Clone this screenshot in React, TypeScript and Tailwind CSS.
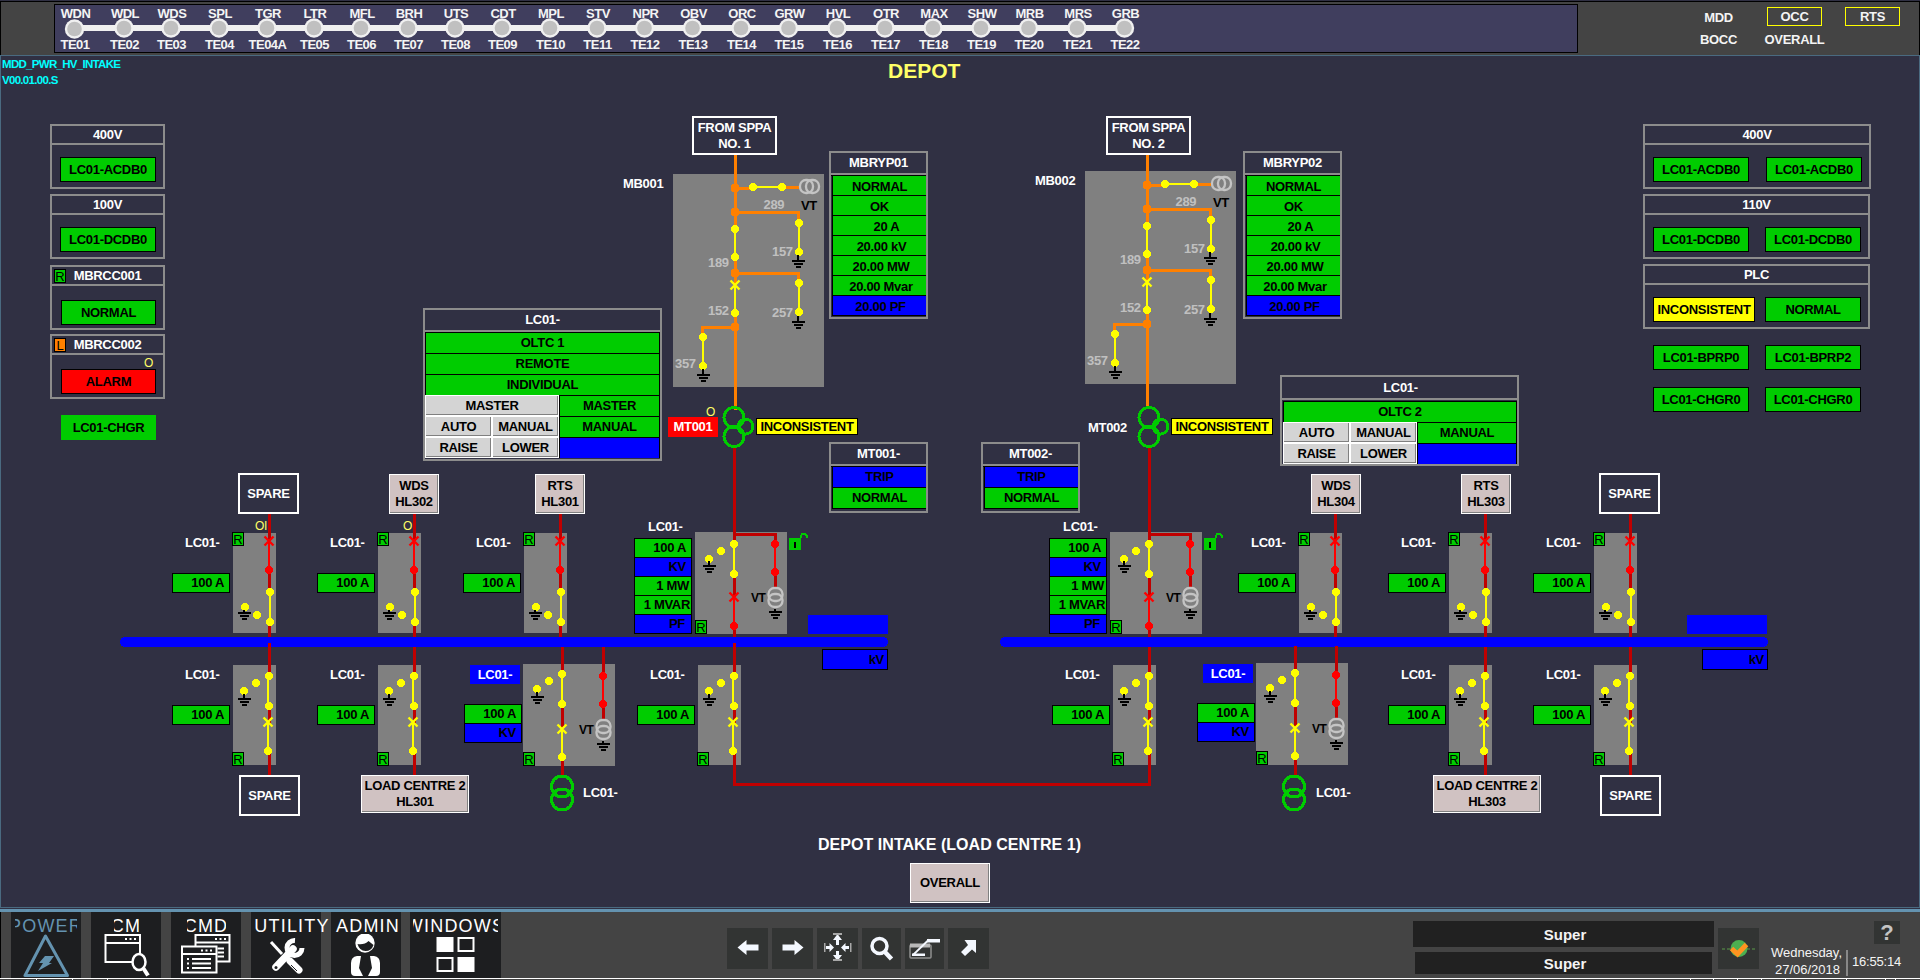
import React from "react";
import clsx from "clsx";

/* ---------- canvas helpers ---------- */

const X0 = 1;
const Y0 = 56;
const YELLOW = "#ffff00";
const RED = "#ff0000";
const FEED = "#c00000";
const ORANGE = "#ff8000";
const LIVE = "#00cc00";

type BoxProps = {
  x: number;
  y: number;
  w?: number;
  h?: number;
  className?: string;
  children?: React.ReactNode;
};

function Place({ x, y, w, h, className, children }: BoxProps) {
  return (
    <div
      className={clsx("absolute flex items-center whitespace-nowrap", className)}
      style={{ left: x - X0, top: y - Y0, width: w, height: h }}
    >
      {children}
    </div>
  );
}

const Label = (p: BoxProps) => <Place h={16} {...p} className={clsx("text-white", p.className)} />;

const FrameNode = (p: BoxProps) => (
  <Place {...p} className="justify-center border-2 border-white bg-[#303043] text-center leading-[16px] text-white" />
);

const LinkNode = (p: BoxProps) => (
  <Place
    {...p}
    className="justify-center border border-white bg-[#d0c2c2] text-center leading-[16px] text-black shadow-[inset_-1px_-1px_0_#808080]"
  />
);

function Badge({ letter, local }: { letter: string; local?: boolean }) {
  return (
    <span
      className={clsx(
        "flex h-[14px] w-[12px] items-center justify-center border border-black text-[13px] leading-none font-normal tracking-normal text-black",
        local ? "bg-[#ff8000]" : "bg-[#00cc00]",
      )}
    >
      {letter}
    </span>
  );
}

/* ---------- symbols ---------- */

const Dot = ({ x, y, c = YELLOW, r = 4 }: { x: number; y: number; c?: string; r?: number }) => (
  <circle cx={x} cy={y} r={r} fill={c} />
);

const Wire = ({ d, c = FEED, w = 3 }: { d: string; c?: string; w?: number }) => (
  <path d={d} stroke={c} strokeWidth={w} fill="none" />
);

const Cross = ({ x, y, c = YELLOW }: { x: number; y: number; c?: string }) => (
  <path d={`M${x - 4.5} ${y - 4.5}l9 9M${x + 4.5} ${y - 4.5}l-9 9`} stroke={c} strokeWidth={2.400} fill="none" shapeRendering="auto" />
);

const Ground = ({ x, y, stem = 4 }: { x: number; y: number; stem?: number }) => (
  <g fill="#000">
    <rect x={x - 1} y={y - stem} width={2} height={stem} />
    <rect x={x - 6} y={y} width={13} height={2} />
    <rect x={x - 4} y={y + 3} width={9} height={2} />
    <rect x={x - 2} y={y + 6} width={5} height={2} />
  </g>
);

const Isolator = ({ x, y1, y2, c = YELLOW }: { x: number; y1: number; y2: number; c?: string }) => (
  <>
    <rect x={x - 1} y={y1} width={2} height={y2 - y1} fill={c} />
    <Dot x={x} y={y1} c={c} />
    <Dot x={x} y={y2} c={c} />
  </>
);

const Breaker = ({ x, y1, y2, c = YELLOW }: { x: number; y1: number; y2: number; c?: string }) => (
  <>
    <rect x={x - 1} y={y1} width={2} height={y2 - y1} fill={c} />
    <Cross x={x} y={y1} c={c} />
    <Dot x={x} y={y2} c={c} />
  </>
);

const Coil = ({ x, y }: { x: number; y: number }) => (
  <g fill="none" stroke="#c4c4c4" strokeWidth={2.300} shapeRendering="auto">
    <rect x={x - 7} y={y + 1} width={14} height={13} rx={6} />
    <rect x={x - 7} y={y + 7} width={14} height={13} rx={6} />
  </g>
);

const Mimic = ({ x, y, size = 13, fill = "#c0c0c0", children, len }: { x: number; y: number; size?: number; fill?: string; children: string; len?: number }) => (
  <text x={x} y={y} fontSize={size} fill={fill} textLength={len}>
    {children}
  </text>
);

/* Intake switchgear between the utility supply and the main transformer */
function Intake({ dx, dy, tx }: { dx: number; dy: number; tx: number }) {
  return (
    <>
      <g transform={`translate(${dx} ${dy})`}>
        <rect x={673} y={174} width={151} height={213} fill="#808080" />
        <Wire d="M735.5 150V410" c={ORANGE} />
        <Wire d="M735 188.5H753M782 187.500H799" c={ORANGE} />
        <Wire d="M735 212.500H798.5V223" c={ORANGE} />
        <Wire d="M735 273.500H798.5V283" c={ORANGE} />
        <Wire d="M735 327.500H702.5V337" c={ORANGE} />
        {[188, 212, 273, 327].map((y) => (
          <Dot key={y} x={735} y={y} c={ORANGE} r={4.5} />
        ))}
        <rect x={753} y={186} width={29} height={2} fill={YELLOW} />
        <Dot x={753} y={187} />
        <Dot x={782} y={187} />
        <g fill="none" stroke="#c4c4c4" strokeWidth={2.300} shapeRendering="auto">
          <rect x={800} y={180} width={13} height={13} rx={6} />
          <rect x={806} y={180} width={13} height={13} rx={6} />
        </g>
        <rect x={733} y={229} width={5} height={28} fill="#808080" />
        <Isolator x={735} y1={229} y2={257} />
        <rect x={733} y={287} width={5} height={26} fill="#808080" />
        <Breaker x={735} y1={285} y2={313} />
        <Isolator x={799} y1={223} y2={252} />
        <Ground x={798} y={260} stem={5} />
        <Isolator x={799} y1={283} y2={312} />
        <Ground x={798} y={321} stem={5} />
        <Isolator x={703} y1={337} y2={366} />
        <Ground x={703} y={374} stem={5} />
        <Mimic x={763.500} y={209}>289</Mimic>
        <Mimic x={772} y={256}>157</Mimic>
        <Mimic x={708} y={267}>189</Mimic>
        <Mimic x={708} y={315}>152</Mimic>
        <Mimic x={772} y={317}>257</Mimic>
        <Mimic x={675} y={368}>357</Mimic>
        <Mimic x={801} y={210} fill="#000">VT</Mimic>
      </g>
      <g transform={`translate(${tx} 0)`}>
        <Wire d="M734.5 447V540" />
        <g fill="none" stroke={LIVE} strokeWidth={3}>
          <circle cx={734} cy={417.500} r={10} />
          <circle cx={734} cy={436.500} r={10} />
          <circle cx={745.500} cy={426.500} r={7.500} />
        </g>
      </g>
    </>
  );
}

/* Outgoing feeder above the busbar */
function UpperBay({ x }: { x: number }) {
  return (
    <g transform={`translate(${x} 0)`}>
      <rect x={0} y={533} width={43} height={100} fill="#808080" />
      <Wire d="M36.500 513V638" />
      <rect x={34} y={541} width={5} height={29} fill="#808080" />
      <Breaker x={36} y1={541} y2={570} c={RED} />
      <rect x={34} y={592} width={5} height={30} fill="#808080" />
      <Isolator x={37} y1={592} y2={622} />
      <Dot x={12} y={607} />
      <Dot x={24} y={615} />
      <Ground x={11} y={612} stem={2} />
    </g>
  );
}

/* Outgoing feeder below the busbar */
function LowerBay({ x, from = 647, to = 776 }: { x: number; from?: number; to?: number }) {
  return (
    <g transform={`translate(${x} 0)`}>
      <rect x={0} y={665} width={43} height={100} fill="#808080" />
      <Wire d={`M36.500 ${from}V${to}`} />
      <rect x={34} y={676} width={5} height={30} fill="#808080" />
      <rect x={34} y={724} width={5} height={27} fill="#808080" />
      <rect x={34} y={676} width={2} height={30} fill={YELLOW} />
      <Dot x={36} y={676} />
      <Dot x={36} y={706} />
      <Breaker x={35} y1={722} y2={751} />
      <Dot x={23} y={683} />
      <Dot x={11} y={691} />
      <Ground x={11} y={698} />
    </g>
  );
}

/* Bay with a voltage transformer; incomer sits above the busbar */
function VtBay({ x, y, incomer }: { x: number; y: number; incomer?: boolean }) {
  return (
    <g transform={`translate(${x} ${y})`}>
      <rect x={0} y={0} width={92} height={102} fill="#808080" />
      {incomer ? (
        <>
          <Wire d="M39.500 -20V105" />
          <Wire d="M39 2.500H80.500V55" />
        </>
      ) : (
        <>
          <Wire d="M39.500 -17V112" />
          <Wire d="M80.500 -17V55" />
        </>
      )}
      <rect x={37} y={incomer ? 12 : 10} width={5} height={30} fill="#808080" />
      <Isolator x={39} y1={incomer ? 12 : 10} y2={incomer ? 42 : 40} />
      {incomer ? (
        <>
          <rect x={37} y={65} width={5} height={29} fill="#808080" />
          <Breaker x={39} y1={65} y2={94} c={RED} />
        </>
      ) : (
        <>
          <rect x={37} y={67} width={5} height={26} fill="#808080" />
          <Breaker x={39} y1={65} y2={93} />
        </>
      )}
      <Dot x={26} y={incomer ? 19 : 17} />
      <Dot x={14} y={incomer ? 27 : 25} />
      <Ground x={14} y={incomer ? 33 : 32} />
      <rect x={78} y={12} width={5} height={28} fill="#808080" />
      <Isolator x={80} y1={12} y2={40} c={RED} />
      <Coil x={80.500} y={55} />
      <Ground x={80} y={79} stem={2} />
      <Mimic x={56} y={70} size={12} fill="#000" len={14.500}>VT</Mimic>
    </g>
  );
}

const Padlock = ({ x }: { x: number }) => (
  <g transform={`translate(${x} 532)`}>
    <rect x={0} y={6} width={12} height={12} fill={LIVE} />
    <rect x={5} y={10} width={2} height={6} fill="#000" />
    <path d="M11.500 6V4.500L13.500 1.500H16L17.500 3.500V6" stroke={LIVE} strokeWidth={2} fill="none" />
  </g>
);

const LocalTx = ({ x }: { x: number }) => (
  <g fill="none" stroke={LIVE} strokeWidth={3}>
    <circle cx={x} cy={786.500} r={10.500} />
    <circle cx={x} cy={799.500} r={10.500} />
  </g>
);

/* ---------- tables ---------- */

type Row = { t: string; blue?: boolean; pad?: string };

function Values({ title, rows, tall }: { title: string; rows: Row[]; tall?: boolean }) {
  return (
    <div className="flex h-full w-full flex-col border-2 border-[#8c8c8c]">
      <div className="flex h-[22px] shrink-0 items-center justify-center border-b-2 border-[#8c8c8c] pb-[1px] text-white">{title}</div>
      <div className="flex grow flex-col border-t border-black pl-px">
        {rows.map((r) => (
          <div
            key={r.t}
            className={clsx(
              "flex items-center justify-center border-b border-l border-black",
              tall ? "h-[21px]" : "h-[20px] pt-[1.5px]",
              r.blue ? "bg-[#0000ff]" : "bg-[#00cc00]",
              r.pad,
            )}
          >
            {r.t}
          </div>
        ))}
      </div>
    </div>
  );
}

const readings: Row[] = [
  { t: "NORMAL" },
  { t: "OK" },
  { t: "20 A", pad: "pl-[14px]" },
  { t: "20.00 kV", pad: "pl-[4px]" },
  { t: "20.00 MW", pad: "pl-[3px]" },
  { t: "20.00 Mvar", pad: "pl-[3px]" },
  { t: "20.00 PF", blue: true, pad: "pl-[2px]" },
];

const trip: Row[] = [{ t: "TRIP", blue: true }, { t: "NORMAL" }];

const CmdKey = ({ children, wide }: { children: string; wide?: boolean }) => (
  <div
    className={clsx(
      "flex items-center justify-center border border-white bg-[#d4d4d4] pt-px shadow-[inset_-1px_-1px_0_#808080]",
      wide && "col-span-2",
    )}
  >
    {children}
  </div>
);

const State = ({ children, blue, full }: { children?: string; blue?: boolean; full?: boolean }) => (
  <div
    className={clsx(
      "flex items-center justify-center border border-b-0 border-black",
      blue ? "bg-[#0000ff]" : "bg-[#00cc00]",
      full && "col-span-3",
    )}
  >
    {children}
  </div>
);

function TapChanger({ low, children }: { low?: boolean; children: React.ReactNode }) {
  return (
    <div className="flex h-full w-full flex-col border-2 border-[#8c8c8c]">
      <div
        className={clsx(
          "flex shrink-0 items-center justify-center border-b-2 border-[#8c8c8c] text-white",
          low ? "mb-px h-[23px] pl-[2px]" : "h-[22px]",
        )}
      >
        LC01-
      </div>
      <div className={clsx("grid grow auto-rows-[21px] grid-cols-[67px_67px_1fr]", low && "pl-px")}>{children}</div>
    </div>
  );
}

function Meters({ x, y, rows }: { x: number; y: number; rows: Row[] }) {
  return (
    <Place x={x} y={y} w={58} className="flex-col items-stretch! border-t border-black text-black">
      {rows.map((r) => (
        <div
          key={r.t}
          className={clsx(
            "flex h-[19px] items-center justify-end border-x border-b border-black",
            r.blue ? "bg-[#0000ff]" : "bg-[#00cc00]",
            r.pad ?? "pr-[5px]",
          )}
        >
          {r.t}
        </div>
      ))}
    </Place>
  );
}

const amps: Row[] = [{ t: "100 A" }];
const ampsKv: Row[] = [{ t: "100 A" }, { t: "KV", blue: true }];
const incomerRows: Row[] = [
  { t: "100 A" },
  { t: "KV", blue: true },
  { t: "1 MW", pad: "pr-[2px]" },
  { t: "1 MVAR", pad: "pr-[1px]" },
  { t: "PF", blue: true, pad: "pr-[6px]" },
];

/* ---------- side columns ---------- */

function Tag({ children, tone = "ok", plain, className }: { children: string; tone?: "ok" | "warn" | "alarm"; plain?: boolean; className?: string }) {
  return (
    <div
      className={clsx(
        "flex h-[25px] w-[96px] items-center justify-center whitespace-nowrap text-black",
        !plain && "border border-black",
        tone === "ok" && "bg-[#00cc00]",
        tone === "warn" && "bg-[#ffff00]",
        tone === "alarm" && "bg-[#ff0000]",
        className,
      )}
    >
      {children}
    </div>
  );
}

function Card({ title, badge, children, className }: { title: string; badge?: React.ReactNode; children: React.ReactNode; className?: string }) {
  return (
    <section className={clsx("flex h-[65px] flex-col border-2 border-[#8c8c8c]", className)}>
      <header className="relative flex h-[19px] shrink-0 items-center justify-center border-b-2 border-[#8c8c8c] pt-[1px] text-white">
        {badge && <span className="absolute top-[2px] left-[2px]">{badge}</span>}
        {title}
      </header>
      {children}
    </section>
  );
}

function LeftColumn() {
  return (
    <aside className="flex w-[115px] flex-col">
      <Card title="400V">
        <Tag className="mt-[12px] ml-[8px]">LC01-ACDB0</Tag>
      </Card>
      <Card title="100V" className="mt-[5px]">
        <Tag className="mt-[12px] ml-[8px]">LC01-DCDB0</Tag>
      </Card>
      <Card title="MBRCC001" badge={<Badge letter="R" />} className="mt-[6px]">
        <Tag className="mt-[14px] ml-[9px] w-[95px]!">NORMAL</Tag>
      </Card>
      <Card title="MBRCC002" badge={<Badge letter="L" local />} className="mt-[4px]">
        <div className="h-[14px] pr-[10px] text-right text-[12px] leading-[16px] font-normal text-[#ffff66]">O</div>
        <Tag tone="alarm" className="ml-[9px] w-[95px]!">ALARM</Tag>
      </Card>
      <Tag plain className="mt-[16px] ml-[11px] w-[95px]!">LC01-CHGR</Tag>
    </aside>
  );
}

function RightColumn() {
  return (
    <aside className="flex w-[228px] flex-col">
      <Card title="400V">
        <div className="mt-[12px] flex gap-[17px] pl-[8px]">
          <Tag>LC01-ACDB0</Tag>
          <Tag>LC01-ACDB0</Tag>
        </div>
      </Card>
      <Card title="110V" className="mt-[5px] w-[227px]">
        <div className="mt-[12px] flex gap-[16px] pl-[8px]">
          <Tag>LC01-DCDB0</Tag>
          <Tag>LC01-DCDB0</Tag>
        </div>
      </Card>
      <Card title="PLC" className="mt-[5px] w-[227px]">
        <div className="mt-[12px] flex justify-between pr-[7px] pl-[8px]">
          <Tag tone="warn" className="w-[102px]!">INCONSISTENT</Tag>
          <Tag>NORMAL</Tag>
        </div>
      </Card>
      <div className="mt-[16px] flex gap-[16px] pl-[10px]">
        <Tag>LC01-BPRP0</Tag>
        <Tag>LC01-BPRP2</Tag>
      </div>
      <div className="mt-[17px] flex gap-[16px] pl-[10px]">
        <Tag>LC01-CHGR0</Tag>
        <Tag>LC01-CHGR0</Tag>
      </div>
    </aside>
  );
}

/* ---------- single-line diagram ---------- */

const upperBays = [233, 378, 524, 1299, 1449, 1594];
const lowerBays = [233, 378, 698, 1113, 1449, 1594];

function Diagram() {
  return (
    <div className="absolute inset-0">
      <svg
        className="absolute inset-0 font-bold"
        width={1918}
        height={851}
        viewBox="1 56 1918 851"
        shapeRendering="crispEdges"
      >
        <Intake dx={0} dy={0} tx={0} />
        <Intake dx={412} dy={-3} tx={415} />
        {upperBays.map((x) => (
          <UpperBay key={x} x={x} />
        ))}
        <VtBay x={695} y={532} incomer />
        <VtBay x={1110} y={532} incomer />
        <Padlock x={789} />
        <Padlock x={1204} />
        <rect x={120} y={637} width={768} height={10} rx={5} fill="#0000ff" />
        <rect x={1000} y={637} width={768} height={10} rx={5} fill="#0000ff" />
        {lowerBays.map((x) => (
          <LowerBay key={x} x={x} from={x === 233 || x === 698 ? 643 : 647} />
        ))}
        <Wire d="M734.500 775V784.500H1149.500V775" />
        <VtBay x={523} y={664} />
        <VtBay x={1256} y={663} />
        <LocalTx x={562} />
        <LocalTx x={1294} />
      </svg>

      <FrameNode x={692} y={116} w={85} h={39}>FROM SPPA<br />NO. 1</FrameNode>
      <FrameNode x={1106} y={116} w={85} h={39}>FROM SPPA<br />NO. 2</FrameNode>
      <Label x={623} y={176}>MB001</Label>
      <Label x={1035} y={173}>MB002</Label>
      <Place x={829} y={151} w={99} h={168}><Values title="MBRYP01" rows={readings} /></Place>
      <Place x={1243} y={151} w={99} h={168}><Values title="MBRYP02" rows={readings} /></Place>
      <Place x={829} y={442} w={99} h={71}><Values title="MT001-" rows={trip} tall /></Place>
      <Place x={981} y={442} w={99} h={71}><Values title="MT002-" rows={trip} tall /></Place>

      <Place x={423} y={308} w={239} h={153}>
        <TapChanger>
          <State full>OLTC 1</State>
          <State full>REMOTE</State>
          <State full>INDIVIDUAL</State>
          <CmdKey wide>MASTER</CmdKey>
          <State>MASTER</State>
          <CmdKey>AUTO</CmdKey>
          <CmdKey>MANUAL</CmdKey>
          <State>MANUAL</State>
          <CmdKey>RAISE</CmdKey>
          <CmdKey>LOWER</CmdKey>
          <State blue />
        </TapChanger>
      </Place>
      <Place x={1280} y={375} w={239} h={91}>
        <TapChanger low>
          <State full>OLTC 2</State>
          <CmdKey>AUTO</CmdKey>
          <CmdKey>MANUAL</CmdKey>
          <State>MANUAL</State>
          <CmdKey>RAISE</CmdKey>
          <CmdKey>LOWER</CmdKey>
          <State blue />
        </TapChanger>
      </Place>

      <Label x={706} y={404} className="text-[12px] font-normal! text-[#ffff66]!">O</Label>
      <Place x={668} y={417} w={50} h={20} className="justify-center bg-[#ff0000] text-white">MT001</Place>
      <Label x={1088} y={420}>MT002</Label>
      <Place x={756} y={418} w={102} h={17} className="justify-center border border-black bg-[#ffff00]">INCONSISTENT</Place>
      <Place x={1171} y={418} w={102} h={17} className="justify-center border border-black bg-[#ffff00]">INCONSISTENT</Place>

      <FrameNode x={238} y={473} w={61} h={41}>SPARE</FrameNode>
      <LinkNode x={389} y={474} w={50} h={40}>WDS<br />HL302</LinkNode>
      <LinkNode x={535} y={474} w={50} h={40}>RTS<br />HL301</LinkNode>
      <LinkNode x={1311} y={474} w={50} h={40}>WDS<br />HL304</LinkNode>
      <LinkNode x={1461} y={474} w={50} h={40}>RTS<br />HL303</LinkNode>
      <FrameNode x={1599} y={473} w={61} h={41}>SPARE</FrameNode>
      <Label x={255} y={518} className="text-[12px] font-normal! text-[#ffff66]!">OI</Label>
      <Label x={403} y={518} className="text-[12px] font-normal! text-[#ffff66]!">O</Label>

      {upperBays.map((x) => (
        <React.Fragment key={x}>
          <Label x={x - 48} y={535}>LC01-</Label>
          <Place x={x - 1} y={532}><Badge letter="R" /></Place>
          <Meters x={x - 61} y={573} rows={amps} />
        </React.Fragment>
      ))}
      {lowerBays.map((x) => (
        <React.Fragment key={x}>
          <Label x={x - 48} y={667}>LC01-</Label>
          <Place x={x - 1} y={752}><Badge letter="R" /></Place>
          <Meters x={x - 61} y={705} rows={amps} />
        </React.Fragment>
      ))}
      {[695, 1110].map((x) => (
        <React.Fragment key={x}>
          <Label x={x - 47} y={519}>LC01-</Label>
          <Place x={x} y={620}><Badge letter="R" /></Place>
          <Meters x={x - 61} y={538} rows={incomerRows} />
        </React.Fragment>
      ))}
      {[[523, 664], [1256, 663]].map(([x, y]) => (
        <React.Fragment key={x}>
          <Place x={x - 53} y={y + 1} w={50} h={19} className="justify-center bg-[#0000ff] text-white">LC01-</Place>
          <Place x={x} y={y + 88}><Badge letter="R" /></Place>
          <Meters x={x - 59} y={y + 40} rows={ampsKv} />
          <Label x={x + 60} y={785}>LC01-</Label>
        </React.Fragment>
      ))}
      {[[808, 822], [1687, 1702]].map(([x, kv]) => (
        <React.Fragment key={x}>
          <Place x={x} y={615} w={80} h={19} className="bg-[#0000ff]" />
          <Place x={kv} y={649} w={66} h={21} className="justify-end border border-black bg-[#0000ff] pr-[3px]">kV</Place>
        </React.Fragment>
      ))}

      <FrameNode x={239} y={775} w={61} h={41}>SPARE</FrameNode>
      <LinkNode x={361} y={775} w={108} h={38}>LOAD CENTRE 2<br />HL301</LinkNode>
      <LinkNode x={1433} y={775} w={108} h={38}>LOAD CENTRE 2<br />HL303</LinkNode>
      <FrameNode x={1600} y={775} w={61} h={41}>SPARE</FrameNode>

      <Label x={818} y={837} className="text-[16px] tracking-[0.04px]">DEPOT INTAKE (LOAD CENTRE 1)</Label>
      <LinkNode x={910} y={863} w={80} h={40}>OVERALL</LinkNode>
    </div>
  );
}

/* ---------- header ---------- */

const stations: [string, string, number][] = [
  ["WDN", "TE01", 74.5], ["WDL", "TE02", 124], ["WDS", "TE03", 171], ["SPL", "TE04", 219],
  ["TGR", "TE04A", 267], ["LTR", "TE05", 314], ["MFL", "TE06", 361], ["BRH", "TE07", 408],
  ["UTS", "TE08", 455], ["CDT", "TE09", 502], ["MPL", "TE10", 550], ["STV", "TE11", 597],
  ["NPR", "TE12", 644.5], ["OBV", "TE13", 692.5], ["ORC", "TE14", 741], ["GRW", "TE15", 788.5],
  ["HVL", "TE16", 837], ["OTR", "TE17", 885], ["MAX", "TE18", 933], ["SHW", "TE19", 981],
  ["MRB", "TE20", 1028.5], ["MRS", "TE21", 1077], ["GRB", "TE22", 1124.5],
];

function LineMap() {
  return (
    <svg width={1522} height={47} viewBox="55 5 1522 47" className="text-[13px] font-bold tracking-[-0.5px]">
      <rect x={75} y={25} width={1050} height={6} fill="#f0f0f0" />
      {stations.map(([name, code, x], i) => (
        <g key={code} textAnchor="middle" fill="#f4f4f4">
          <text x={x + 1} y={18}>{name}</text>
          <circle cx={x} cy={i ? 28 : 29} r={9.700} fill="#f0f0f0" />
          <circle cx={x} cy={i ? 28 : 29} r={7.300} fill="#c0c0c0" />
          <text x={x + 0.500} y={49}>{code}</text>
        </g>
      ))}
    </svg>
  );
}

function Header() {
  return (
    <header className="flex h-[55px] border-t border-[#303043] bg-[#444444]">
      <div className="flex grow border-x border-t border-black pt-[2px] pl-[53px]">
        <div className="h-[49px] w-[1524px] border border-black bg-[#403e5e]">
          <LineMap />
        </div>
        <div className="grid grid-cols-[59px_55px_55px] grid-rows-[19px_19px] gap-x-[21px] gap-y-[4px] pt-[3px] pl-[111px] text-[#f4f4f4]">
          <span className="flex items-center justify-center pt-[3px]">MDD</span>
          <span className="-mr-[2px] ml-[-2px] flex w-[55px] items-center justify-center border border-[#ffff00]">OCC</span>
          <span className="flex items-center justify-center border border-[#ffff00]">RTS</span>
          <span className="flex items-center justify-center">BOCC</span>
          <span className="-ml-[4px] flex items-center justify-center">OVERALL</span>
        </div>
      </div>
    </header>
  );
}

/* ---------- footer ---------- */

function MenuTile({ label, width, clip, active, children }: { label: string; width: string; clip: string; active?: boolean; children: React.ReactNode }) {
  return (
    <div className={clsx("flex flex-col items-center bg-[#1d1e20] pt-[4px]", width, active ? "text-[#6493b0]" : "text-white")}>
      <div className={clsx("flex h-[18px] shrink-0 justify-center overflow-hidden text-[18px] leading-[20px] font-normal tracking-[1.2px]", clip)}>
        <span className="shrink-0">{label}</span>
      </div>
      <svg width={70} height={44} viewBox="0 0 70 44" fill="none" stroke="currentColor" strokeWidth={2}>
        {children}
      </svg>
    </div>
  );
}

function ToolKey({ width = "w-[41px]", children }: { width?: string; children: React.ReactNode }) {
  return (
    <div className={clsx("flex h-[41px] items-center justify-center bg-[#323433]", width)}>
      <svg width={39} height={41} viewBox="0 0 39 41" fill="#f4f8ff">{children}</svg>
    </div>
  );
}

function Footer() {
  return (
    <footer className="flex h-[66px] bg-[#444444]">
      <div className="flex w-[716px] gap-[10px] border-l border-black pl-[10px]">
        <MenuTile label="POWER" width="w-[70px]" clip="w-[62px]" active>
          <path d="M34.500 2L14 41.500H56.500Z" strokeWidth={3} strokeLinejoin="round" />
          <path d="M34 22h9l-5 7h3L27 37l5-8h-4Z" fill="currentColor" stroke="none" />
        </MenuTile>
        <MenuTile label="CM" width="w-[70px]" clip="w-[25px]">
          <path d="M41 28H14.500V1H49V20M14 9H49" />
          <path d="M34 5h2M38.500 5h2M43 5h2" />
          <ellipse cx={48} cy={28} rx={6.500} ry={8} strokeWidth={2.500} />
          <path d="M52.500 34.500L57 41.500" strokeWidth={4} />
        </MenuTile>
        <MenuTile label="CMD" width="w-[70px]" clip="w-[39px]">
          <path d="M24.500 12V1H58.500V27.500H46M24 8.500H58" />
          <path d="M44 5h2M48.500 5h2M53 5h2M46.500 14.500H53M46.500 18.500H53M46.500 22.500H53" />
          <path d="M11 12.500H45.500V38.500H11ZM11 20H45.500M30 16.500h2M34.500 16.500h2M39 16.500h2" />
          <path d="M16 25h2M21 25H40M16 29.500h2M21 29.500H40M16 34h2M21 34H40" />
        </MenuTile>
        <MenuTile label="UTILITY" width="w-[70px]" clip="relative left-[5px] w-[80px] overflow-visible! pl-[2px]">
          <path d="M20 8L31 20" strokeWidth={3} />
          <path d="M39 27L48 36" strokeWidth={7} strokeLinecap="round" />
          <path d="M40 31l6 6" stroke="#1d1e20" strokeWidth={1} />
          <path d="M25 33L42 15" strokeWidth={7.500} strokeLinecap="round" />
          <path d="M44 6.500A7.500 7.500 0 1 0 51 14" strokeWidth={5} />
          <circle cx={25} cy={33.500} r={1.500} fill="#1d1e20" stroke="none" />
        </MenuTile>
        <MenuTile label="ADMIN" width="w-[70px]" clip="relative left-[2px] w-[66px]">
          <g fill="currentColor" stroke="none">
            <circle cx={34} cy={9} r={9.700} />
            <path d="M26 22h4l-2 12 4 8H24q-4 0-4-4V29q0-6 6-7ZM43 22h-4l2 12-4 8h8q4 0 4-4V29q0-6-6-7Z" />
            <path d="M32 22h5l-1 5 2 10-3.500 4-3.500-4 2-10Z" fill="#1d1e20" />
          </g>
          <path d="M26.500 10q7 1 11-3l5 4q-2 6-8 6t-8-7Z" fill="#1d1e20" stroke="none" />
        </MenuTile>
        <MenuTile label="WINDOWS" width="-ml-px w-[91px]" clip="w-[85px]">
          <g fill="currentColor">
            <rect x={16.500} y={4} width={15} height={13} />
            <rect x={37.500} y={24} width={15} height={13} />
          </g>
          <rect x={37.500} y={4} width={15} height={13} />
          <rect x={16.500} y={24} width={15} height={13} />
        </MenuTile>
      </div>

      <div className="flex w-[697px] gap-[4px] pt-[16px] pl-[11px]">
        <ToolKey><path d="M9.500 19.500l9-7.500v4.500h12v6h-12V27Z" /></ToolKey>
        <ToolKey><path d="M30.500 19.500l-9-7.500v4.500h-12v6h12V27Z" /></ToolKey>
        <ToolKey>
          <path d="M19.500 6l4.500 6h-3v5h-3v-5h-3ZM19.500 33l4.500-6h-3v-4h-3v4h-3ZM16 19.500l-4.500-4.500v3H8v3h3.500v3ZM23 19.500l4.500-4.500v3H31v3h-3.500v3Z" />
          <path d="M15 5h9v2h-9ZM15 31h9v2h-9ZM6 15h1.500v9H6ZM32 15h1.500v9H32Z" fill="#a8a8a8" />
        </ToolKey>
        <ToolKey width="w-[39px]">
          <circle cx={17.500} cy={18} r={7.500} fill="none" stroke="#f4f8ff" strokeWidth={3.500} />
          <path d="M22.500 23.500L29.500 31" stroke="#f4f8ff" strokeWidth={4.500} />
        </ToolKey>
        <ToolKey width="w-[39px]">
          <rect x={5} y={17} width={21} height={13} rx={1} fill="none" stroke="#909090" strokeWidth={1.500} />
          <path d="M5 15.500h20v4H5Z" fill="#b8b8b8" />
          <path d="M22 11h13v3.500H22ZM7 25.500h13V28H7Z" />
          <path d="M24 11.500L8 27" fill="none" stroke="#f4f8ff" strokeWidth={1.800} />
        </ToolKey>
        <ToolKey><path d="M27 12v13l-4-3.500L16 28l-4-4 7-7-3.500-5Z" /></ToolKey>
      </div>

      <div className="flex w-[301px] flex-col items-center pt-[9px] text-[15px] tracking-normal text-[#f4f4f4]">
        <div className="flex h-[26px] w-[301px] items-center justify-center bg-[#212121] pt-[2px] pl-[3px]">Super</div>
        <div className="mt-[5px] flex h-[22px] w-[297px] items-center justify-center bg-[#212121] pt-[2px] pl-[3px]">Super</div>
      </div>

      <div className="mt-[16px] ml-[4px] h-[41px] w-[41px] bg-[#323433]">
        <svg width={41} height={41} viewBox="0 0 41 41" fill="none">
          <path d="M4 21h34" stroke="#5b9a4a" strokeDasharray="3 2" />
          <circle cx={21} cy={20.500} r={8.500} fill="#4caf50" />
          <path d="M13.500 20.500l6 5.500L28.500 16.500" stroke="#ff9420" strokeWidth={5} />
        </svg>
      </div>

      <div className="flex grow justify-end pr-[19px] text-[13px] leading-[17px] font-normal tracking-normal text-[#f4f4f4]">
        <div className="flex flex-col items-end pt-[32px]">
          <span>Wednesday,</span>
          <span className="pr-[2px]">27/06/2018</span>
        </div>
        <div className="mt-[38px] ml-[4px] h-[26px] w-[2px] bg-[#888888]" />
        <div className="flex w-[53px] flex-col items-end pt-[9px]">
          <div className="mr-[1px] flex h-[23px] w-[26px] items-center justify-center bg-[#323433] text-[22px] font-bold text-[#c4c4c4]">?</div>
          <span className="mt-[9px] tracking-[-0.2px]">16:55:14</span>
        </div>
      </div>
    </footer>
  );
}

const ticks = [36, 72, 107, 1690, 1713, 1737, 1761, 1785, 1846, 1885, 1895];

export default function App() {
  return (
    <div className="flex h-[980px] w-[1920px] flex-col overflow-hidden bg-[#303043] font-['Liberation_Sans',Arial,sans-serif] text-[13px] font-bold tracking-[-0.3px] text-black">
      <Header />
      <main className="relative h-[853px] shrink-0 border border-[#4a6a80]">
        <Diagram />
        <div className="relative flex h-[68px]">
          <div className="w-[887px] pl-[1px] text-[11.5px] leading-[16px] tracking-[-0.7px] text-[#00ffff]">
            MDD_PWR_HV_INTAKE
            <br />
            V00.01.00.S
          </div>
          <h1 className="pt-[4px] text-[21px] leading-[22px] tracking-normal text-[#ffff66]">DEPOT</h1>
        </div>
        <div className="relative flex justify-between pr-[48px] pl-[49px]">
          <LeftColumn />
          <RightColumn />
        </div>
      </main>
      <div className="mt-px h-[3px] shrink-0 bg-[#6493b0]" />
      <Footer />
      <div className="h-px shrink-0 bg-white" />
      <svg width={1920} height={1} className="block shrink-0 bg-[#444444]">
        {ticks.map((x) => (
          <rect key={x} x={x} y={0} width={1} height={1} fill="#fff" />
        ))}
      </svg>
    </div>
  );
}
